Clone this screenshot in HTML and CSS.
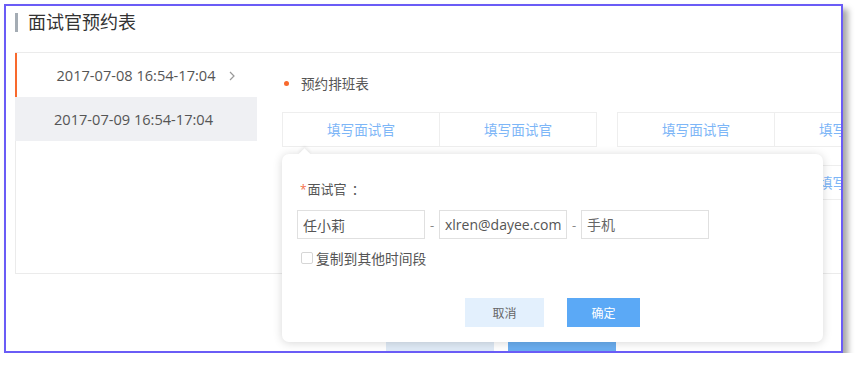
FILE: index.html
```html
<!DOCTYPE html>
<html lang="zh-CN">
<head>
  <meta charset="UTF-8">
  <title>面试官预约表</title>
  <link rel="stylesheet" href="styles.css">
</head>
<body>

<div class="frame">
  <div class="page-header">
    <span class="title-bar"></span>
    <h1>面试官预约表</h1>
  </div>

  <div class="schedule">
    <div class="slot-list">
      <div class="slot active">
        2017-07-08 16:54-17:04
        <svg class="chevron" width="6" height="10" viewBox="0 0 6 10"><polyline points="1,1 5,5 1,9" fill="none" stroke="#999" stroke-width="1.2"/></svg>
      </div>
      <div class="slot selected">2017-07-09 16:54-17:04</div>
    </div>

    <div class="slot-detail">
      <div class="section-title"><span class="dot"></span>预约排班表</div>

      <div class="grid">
        <div class="grid-row">
          <div class="cell-group"><div class="cell">填写面试官</div><div class="cell">填写面试官</div></div>
          <div class="cell-group"><div class="cell">填写面试官</div><div class="cell">填写面试官</div></div>
        </div>
        <div class="grid-row">
          <div class="cell-group"><div class="cell">填写面试官</div><div class="cell">填写面试官</div></div>
          <div class="cell-group"><div class="cell">填写面试官</div><div class="cell">填写面试官</div></div>
        </div>
      </div>
    </div>
  </div>

  <div class="page-footer">
    <button class="btn btn-light wide">取消</button>
    <button class="btn btn-primary wide">保存</button>
  </div>

  <div class="popover">
    <span class="arrow"></span>
    <div class="field-label"><span class="required">*</span>面试官<span class="colon">：</span></div>
    <div class="field-row">
      <input class="text-input" type="text" value="任小莉">
      <span class="sep">-</span>
      <input class="text-input" type="text" value="xlren@dayee.com">
      <span class="sep">-</span>
      <input class="text-input" type="text" placeholder="手机">
    </div>
    <label class="copy-check"><span class="box"></span>复制到其他时间段</label>
    <div class="popover-actions">
      <button class="btn btn-light cancel">取消</button>
      <button class="btn btn-primary confirm">确定</button>
    </div>
  </div>
</div>

</body>
</html>
```

FILE: styles.css
```css
body {
  margin: 0;
  background: #fff;
  font-family: 'Open Sans', 'Noto Sans CJK SC', sans-serif;
  color: #555;
}

.frame {
  position: relative;
  box-sizing: border-box;
  width: 839px;
  height: 349px;
  margin: 4px 0 0 4px;
  padding-left: 9px;
  border: 2px solid #6a5cf6;
  background: #fff;
  box-shadow: 5px 5px 6px rgba(0,0,0,0.35);
  overflow: hidden;
}

.page-header {
  display: flex;
  align-items: flex-start;
  box-sizing: border-box;
  height: 46px;
  padding-top: 7px;
}

.title-bar {
  width: 3px;
  height: 19px;
  background: #a4acb4;
  margin-right: 10px;
}

.page-header h1 {
  margin: 0;
  font-size: 18px;
  line-height: 19px;
  font-weight: normal;
  color: #333;
}

.schedule {
  display: flex;
  width: 1000px;
  height: 222px;
  box-sizing: border-box;
  border: 1px solid #ebebeb;
}

.slot-list {
  width: 242px;
  margin-left: -1px;
  flex-shrink: 0;
}

.slot {
  position: relative;
  height: 44px;
  line-height: 44px;
  text-align: center;
  font-size: 14.6px;
  color: #555;
}

.slot.active {
  box-shadow: inset 2px 0 0 #f8692d;
}

.slot.selected {
  background: #eff0f3;
  padding-right: 5px;
}

.chevron {
  position: absolute;
  right: 22px;
  top: 18px;
}

.slot-detail {
  padding-left: 25px;
  padding-top: 20px;
}

.section-title {
  display: flex;
  align-items: center;
  height: 20px;
  padding-left: 2px;
  font-size: 13.6px;
  color: #555;
}

.dot {
  width: 5px;
  height: 5px;
  border-radius: 50%;
  background: #f8692d;
  margin-right: 12px;
}

.grid {
  margin-top: 19px;
  display: flex;
  flex-direction: column;
  gap: 18px;
}

.grid-row {
  display: flex;
  gap: 20px;
}

.cell-group {
  display: flex;
  border: 1px solid #eee;
}

.cell {
  width: 156px;
  height: 33px;
  line-height: 33px;
  text-align: center;
  font-size: 13.6px;
  color: #7db6f7;
}

.cell + .cell {
  border-left: 1px solid #eee;
}

.page-footer {
  display: flex;
  gap: 14px;
  padding: 46px 0 0 371px;
}

.btn {
  border: none;
  font-family: inherit;
  font-size: 12px;
  cursor: pointer;
}

.btn-light {
  background: #e3f0fd;
  color: #666;
}

.btn-primary {
  background: #5ba9f6;
  color: #fff;
}

.wide {
  width: 108px;
  height: 32px;
}

.page-footer .btn-light {
  background: #dfeaf6;
}

.page-footer .btn-primary {
  background: #6aaef0;
}

.popover {
  position: absolute;
  left: 276px;
  top: 148px;
  box-sizing: border-box;
  width: 541px;
  height: 188px;
  padding: 25px 0 0 15px;
  background: #fff;
  border-radius: 7px;
  box-shadow: 0 1px 10px rgba(0,0,0,0.16);
}

.arrow {
  position: absolute;
  left: 18px;
  top: -4px;
  width: 9px;
  height: 9px;
  background: #fff;
  transform: rotate(45deg);
  box-shadow: -2px -2px 3px rgba(0,0,0,0.06);
}

.field-label {
  height: 20px;
  line-height: 20px;
  padding-left: 3px;
  font-size: 13px;
  color: #555;
}

.required {
  color: #f5704a;
  font-size: 12px;
  margin-right: 1px;
}

.colon {
  margin-left: 5px;
}

.field-row {
  display: flex;
  align-items: center;
  margin-top: 11px;
}

.text-input {
  box-sizing: border-box;
  width: 128px;
  height: 29px;
  padding: 0 5px;
  border: 1px solid #e0e0e0;
  font-family: inherit;
  font-size: 14px;
  color: #555;
  outline: none;
}

.text-input::placeholder {
  color: #666;
}

.sep {
  width: 14px;
  text-align: center;
  font-size: 13px;
  color: #888;
}

.copy-check {
  display: flex;
  align-items: center;
  height: 20px;
  margin-top: 9px;
  padding-left: 4px;
  font-size: 13.8px;
  color: #555;
}

.box {
  box-sizing: border-box;
  width: 12px;
  height: 12px;
  border: 1px solid #d6d6d6;
  border-radius: 2px;
  margin-right: 3px;
}

.popover-actions {
  display: flex;
  justify-content: center;
  gap: 23px;
  margin-top: 30px;
  margin-left: -15px;
}

.cancel {
  width: 79px;
  height: 29px;
}

.confirm {
  width: 73px;
  height: 29px;
}
```
